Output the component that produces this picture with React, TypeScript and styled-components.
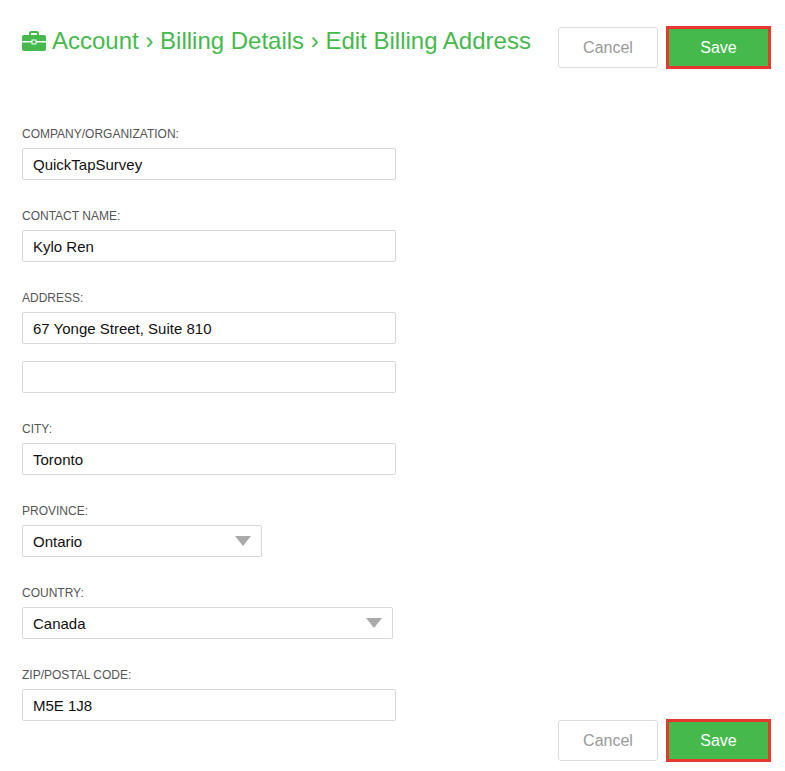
import styled, { createGlobalStyle } from 'styled-components';

const GlobalStyle = createGlobalStyle`
  body {
    margin: 0;
    background: #fff;
    font-family: "Liberation Sans", Arial, sans-serif;
  }
`;

const green = '#46b94c';

const Page = styled.div`
  padding: 26px 14px 0 22px;
  display: flex;
  flex-direction: column;
`;

const Header = styled.div`
  display: flex;
  justify-content: space-between;
  align-items: flex-start;
`;

const Title = styled.h1`
  margin: 1px 0 0;
  display: flex;
  align-items: center;
  gap: 6px;
  font-size: 24px;
  font-weight: normal;
  color: ${green};
`;

const Actions = styled.div`
  display: flex;
  align-items: center;
  gap: 8px;
`;

const CancelButton = styled.button`
  width: 100px;
  height: 41px;
  border: 1px solid #ddd;
  border-radius: 3px;
  background: #fff;
  color: #999;
  font: 16px "Liberation Sans", Arial, sans-serif;
`;

const SaveButton = styled.button`
  width: 105px;
  height: 43px;
  border: 3px solid #e8372f;
  background: ${green};
  color: #fff;
  font: 16px "Liberation Sans", Arial, sans-serif;
`;

const Body = styled.div`
  display: flex;
  justify-content: space-between;
  align-items: flex-end;
  margin-top: 29px;
`;

const Form = styled.div`
  display: flex;
  flex-direction: column;
  margin-bottom: 41px;
`;

const Field = styled.div`
  display: flex;
  flex-direction: column;
  gap: 7px;
  margin-top: 29px;
`;

const Label = styled.label`
  font-size: 12px;
  color: #555;
  line-height: 14px;
`;

const Input = styled.div<{ $w: number }>`
  box-sizing: border-box;
  width: ${(p) => p.$w}px;
  height: 32px;
  border: 1px solid #d8d8d8;
  border-radius: 2px;
  padding: 0 10px;
  display: flex;
  align-items: center;
  justify-content: space-between;
  font-size: 15px;
  color: #111;
`;

const Arrow = styled.span`
  width: 0;
  height: 0;
  border-left: 8px solid transparent;
  border-right: 8px solid transparent;
  border-top: 10px solid #aaa;
`;

const Briefcase = () => (
  <svg width="24" height="20" viewBox="0 0 24 20">
    <path d="M8 4V2.5A1.5 1.5 0 0 1 9.5 1h5A1.5 1.5 0 0 1 16 2.5V4" fill="none" stroke={green} strokeWidth="2" />
    <rect x="0" y="4" width="24" height="16" rx="2" fill={green} />
    <rect x="0" y="10" width="24" height="1.5" fill="#fff" />
    <rect x="10" y="9" width="4" height="4" fill={green} stroke="#fff" strokeWidth="1" />
  </svg>
);

const Buttons = () => (
  <Actions>
    <CancelButton>Cancel</CancelButton>
    <SaveButton>Save</SaveButton>
  </Actions>
);

const App = () => (
  <>
    <GlobalStyle />
    <Page>
      <Header>
        <Title>
          <Briefcase />
          Account › Billing Details › Edit Billing Address
        </Title>
        <Buttons />
      </Header>
      <Body>
        <Form>
          <Field>
            <Label>COMPANY/ORGANIZATION:</Label>
            <Input $w={374}>QuickTapSurvey</Input>
          </Field>
          <Field>
            <Label>CONTACT NAME:</Label>
            <Input $w={374}>Kylo Ren</Input>
          </Field>
          <Field>
            <Label>ADDRESS:</Label>
            <Input $w={374}>67 Yonge Street, Suite 810</Input>
            <Input $w={374} style={{ marginTop: 10 }} />
          </Field>
          <Field>
            <Label>CITY:</Label>
            <Input $w={374}>Toronto</Input>
          </Field>
          <Field>
            <Label>PROVINCE:</Label>
            <Input $w={240}>
              Ontario
              <Arrow />
            </Input>
          </Field>
          <Field>
            <Label>COUNTRY:</Label>
            <Input $w={371}>
              Canada
              <Arrow />
            </Input>
          </Field>
          <Field>
            <Label>ZIP/POSTAL CODE:</Label>
            <Input $w={374}>M5E 1J8</Input>
          </Field>
        </Form>
        <Buttons />
      </Body>
    </Page>
  </>
);

export default App;
